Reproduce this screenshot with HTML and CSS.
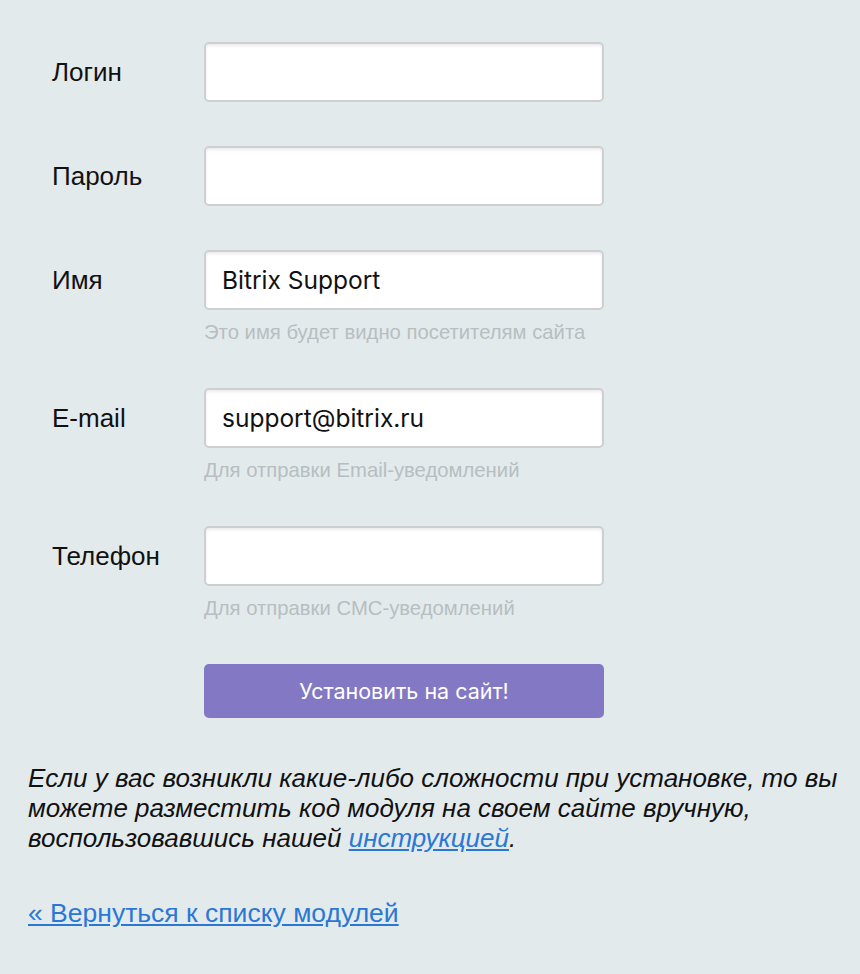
FILE: index.html
```html
<!DOCTYPE html>
<html lang="ru">
<head>
  <meta charset="UTF-8">
  <meta name="viewport" content="width=device-width, initial-scale=1.0">
  <title>Установка модуля</title>
  <link rel="stylesheet" href="styles.css">
</head>
<body>
  <div class="page">
    <form class="install-form" onsubmit="return false;">
      <label class="field-label" for="login">Логин</label>
      <div class="field">
        <input class="field-input" type="text" id="login">
      </div>

      <label class="field-label" for="password">Пароль</label>
      <div class="field">
        <input class="field-input" type="password" id="password">
      </div>

      <label class="field-label" for="name">Имя</label>
      <div class="field">
        <input class="field-input" type="text" id="name" value="Bitrix Support">
        <div class="field-hint">Это имя будет видно посетителям сайта</div>
      </div>

      <label class="field-label" for="email">E-mail</label>
      <div class="field">
        <input class="field-input" type="text" id="email" value="support@bitrix.ru">
        <div class="field-hint">Для отправки Email-уведомлений</div>
      </div>

      <label class="field-label" for="phone">Телефон</label>
      <div class="field">
        <input class="field-input" type="text" id="phone">
        <div class="field-hint">Для отправки СМС-уведомлений</div>
      </div>

      <div></div>
      <div class="field">
        <button class="submit-btn" type="submit">Установить на сайт!</button>
      </div>
    </form>

    <p class="note">Если у вас возникли какие-либо сложности при установке, то вы можете разместить код модуля на своем сайте вручную, воспользовавшись нашей <a href="#">инструкцией</a>.</p>

    <p class="back"><a href="#">« Вернуться к списку модулей</a></p>
  </div>
</body>
</html>
```

FILE: styles.css
```css
body {
  margin: 0;
  background: #e3eaec;
  font-family: "Liberation Sans", Arial, sans-serif;
  color: #111;
}

.page { padding: 42px 16px 30px 28px; }

.install-form {
  display: grid;
  grid-template-columns: 176px 400px;
  row-gap: 44px;
  align-items: start;
}

.field-label {
  padding-left: 24px;
  height: 60px;
  line-height: 60px;
  font-size: 26px;
}

.field-input {
  display: block;
  box-sizing: border-box;
  width: 400px;
  height: 60px;
  margin: 0;
  padding: 0 16px;
  border: 2px solid #cdcfd0;
  border-radius: 5px;
  background: #fff;
  box-shadow: inset 0 2px 3px rgba(0, 0, 0, 0.08);
  font-family: "Inter", "Liberation Sans", sans-serif;
  font-size: 24.5px;
  color: #111;
  outline: none;
}

.field-hint {
  margin-top: 10px;
  line-height: 24px;
  font-size: 20.3px;
  color: #b7bec1;
}

.submit-btn {
  display: block;
  width: 400px;
  height: 54px;
  border: none;
  border-radius: 5px;
  background: #8378c4;
  color: #fff;
  font-family: "Inter", "Liberation Sans", sans-serif;
  font-size: 21.5px;
  cursor: pointer;
}

.note {
  margin: 45px 0 0;
  font-size: 26px;
  line-height: 30px;
  font-style: italic;
}

.note a, .back a { color: #2a78d6; }

.back {
  margin: 45px 0 0;
  font-size: 26.5px;
  line-height: 30px;
}
```
